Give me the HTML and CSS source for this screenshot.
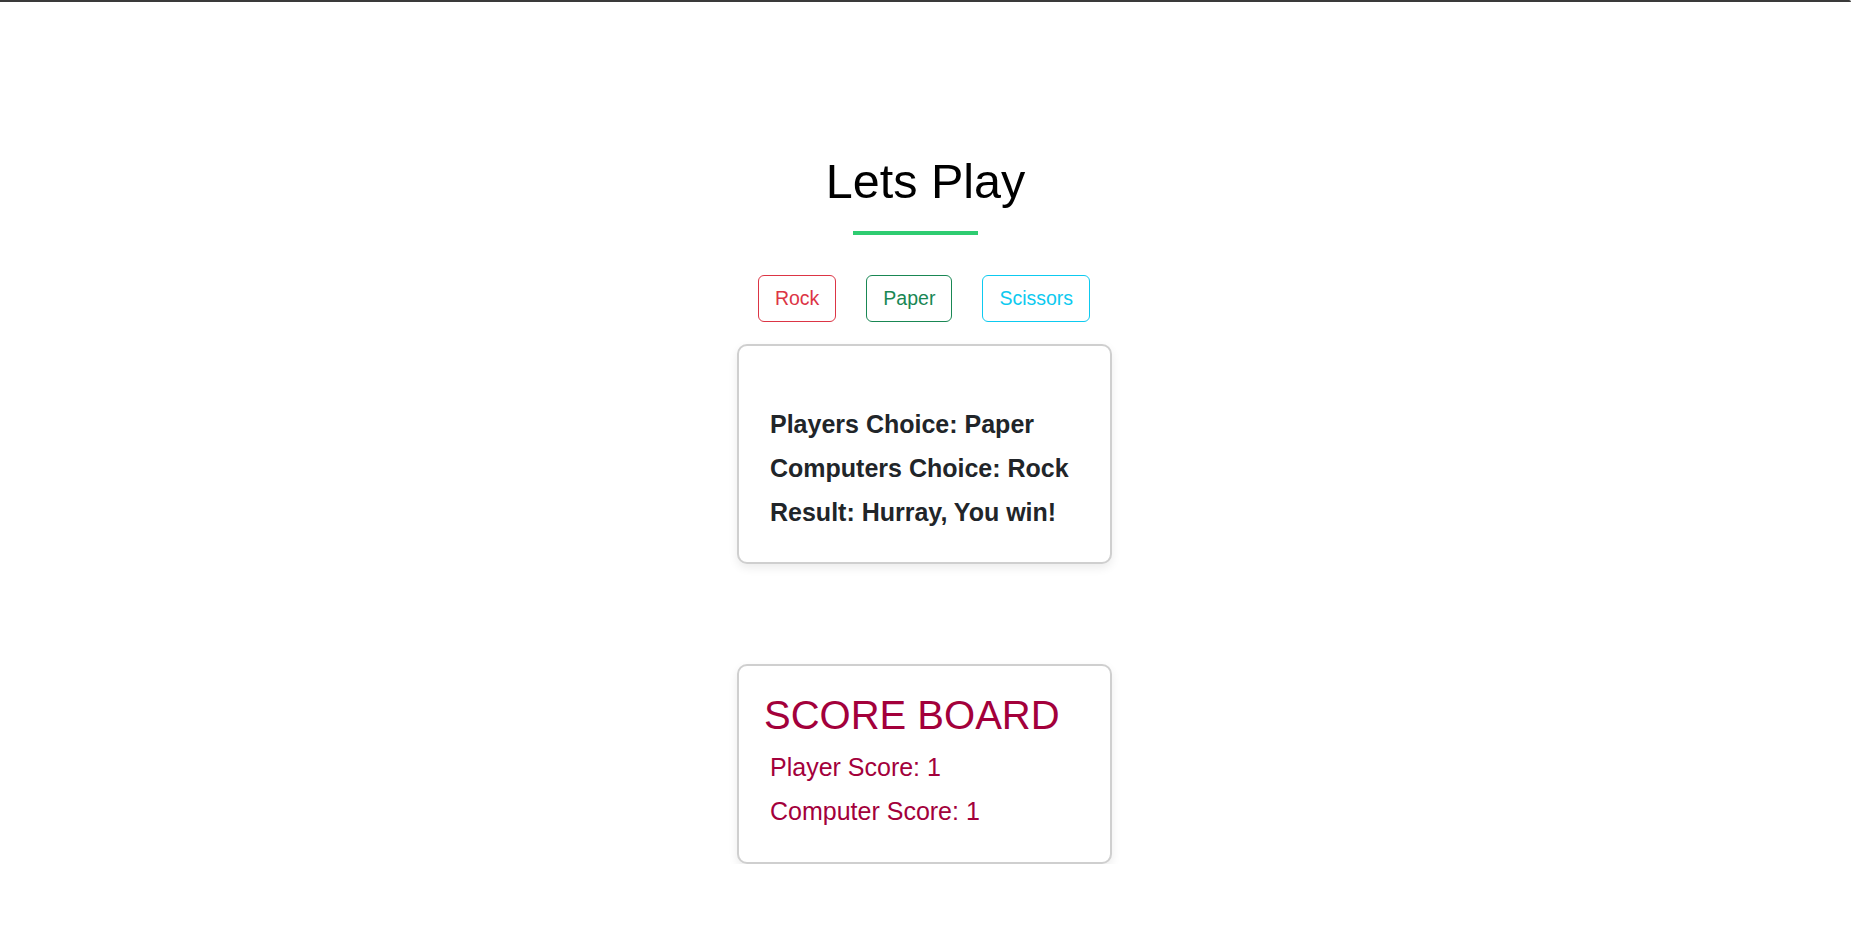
FILE: index.html
```html
<!DOCTYPE html>
<html lang="en">
<head>
<meta charset="utf-8">
<title>Lets Play</title>
<link rel="stylesheet" href="styles.css">
</head>
<body>
<div class="topbar"></div>
<main class="game">
  <h1 class="title">Lets Play</h1>
  <div class="underline"></div>
  <div class="choices">
    <button class="btn btn-rock">Rock</button>
    <button class="btn btn-paper">Paper</button>
    <button class="btn btn-scissors">Scissors</button>
  </div>
  <section class="card result-card">
    <div class="result-line">Players Choice: Paper</div>
    <div class="result-line">Computers Choice: Rock</div>
    <div class="result-line">Result: Hurray, You win!</div>
  </section>
  <section class="card score-card">
    <h2 class="score-title">SCORE BOARD</h2>
    <div class="score-line">Player Score: 1</div>
    <div class="score-line">Computer Score: 1</div>
  </section>
</main>
</body>
</html>
```
FILE: styles.css
```css
* { box-sizing: border-box; }
html, body {
  margin: 0;
  padding: 0;
  background: #ffffff;
  font-family: "Liberation Sans", Arial, sans-serif;
  color: #212529;
}
.topbar {
  height: 2px;
  background: #3a3a3a;
  border-top-right-radius: 3px;
}
.game {
  display: flex;
  flex-direction: column;
  align-items: center;
  padding-top: 150px;
}
.title {
  margin: 0;
  font-size: 48.5px;
  font-weight: 400;
  line-height: 58px;
  color: #000;
}
.underline {
  width: 125px;
  height: 4px;
  background: #2ecc71;
  margin-top: 21px;
  margin-right: 20px;
}
.choices {
  display: flex;
  gap: 30px;
  margin-top: 40px;
  margin-left: -3px;
}
.btn {
  font-family: "Liberation Sans", Arial, sans-serif;
  font-size: 19.5px;
  line-height: 29px;
  padding: 8px 16px;
  background: #fff;
  border: 1px solid;
  border-radius: 6px;
}
.btn-rock { color: #dc3545; border-color: #dc3545; }
.btn-paper { color: #198754; border-color: #198754; }
.btn-scissors { color: #0dcaf0; border-color: #0dcaf0; }
.card {
  width: 375px;
  border: 2px solid #cfcfcf;
  border-radius: 10px;
  background: #fff;
  box-shadow: 0 4px 10px rgba(0, 0, 0, 0.08);
  margin-left: -2px;
}
.result-card {
  margin-top: 22px;
  padding: 56px 20px 28px 31px;
}
.result-line {
  font-size: 25px;
  font-weight: 700;
  line-height: 44px;
  color: #212529;
}
.score-card {
  margin-top: 100px;
  padding: 25px 20px 29px 25px;
  color: #a3003b;
}
.score-title {
  margin: 0 0 6px 0;
  font-size: 40px;
  font-weight: 400;
  line-height: 48px;
}
.score-line {
  font-size: 25px;
  line-height: 44px;
  padding-left: 6px;
}
```
